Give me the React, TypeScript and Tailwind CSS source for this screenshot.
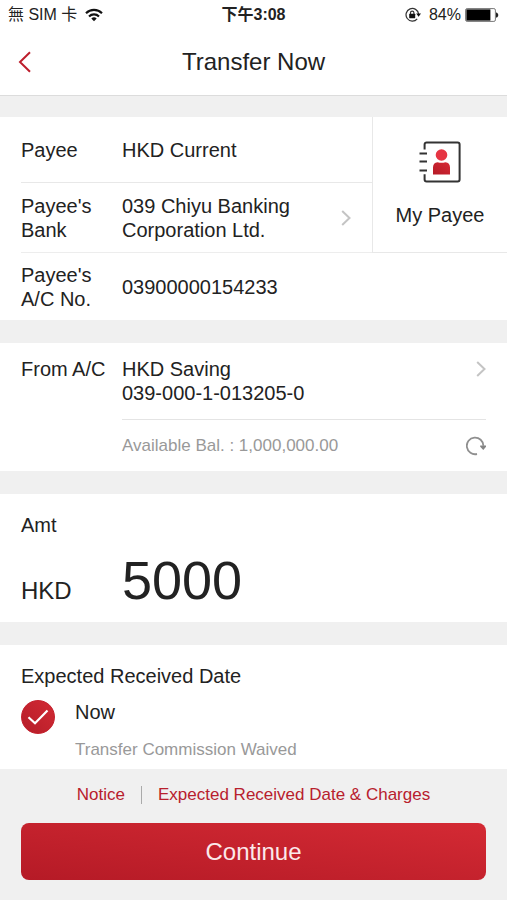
import { useState } from "react";

function WifiIcon() {
  return (
    <svg viewBox="0 0 18 14" className="h-[14px] w-[18px]" fill="none" stroke="#111" strokeWidth="2.1">
      <path d="M1 5.2a11.4 11.4 0 0 1 16 0" />
      <path d="M4 8.4a7.1 7.1 0 0 1 10 0" />
      <path d="M9 13.2 6.3 10.6a3.8 3.8 0 0 1 5.4 0Z" fill="#111" stroke="none" />
    </svg>
  );
}

function RotationLockIcon() {
  return (
    <svg viewBox="0 0 16 16" className="h-4 w-4" fill="none" stroke="#333" strokeWidth="1.2">
      <path d="M12.2 11.8A6.3 6.3 0 1 1 13.6 7" />
      <path d="M11.2 6.6h4.8l-2.4 3.2Z" fill="#111" stroke="none" />
      <path d="M5.5 7.2V5.8a1.7 1.7 0 0 1 3.4 0v1.4" />
      <rect x="4.2" y="6.8" width="6" height="4.4" rx="0.4" fill="#111" stroke="none" />
    </svg>
  );
}

function BatteryIcon() {
  return (
    <svg viewBox="0 0 34 14" className="h-[14px] w-[34px]">
      <rect x="0.6" y="0.6" width="29.8" height="12.8" rx="1.5" fill="#fff" stroke="#777" />
      <rect x="1.4" y="1.4" width="24" height="11.2" fill="#000" />
      <path d="M31 4.4c3 .4 3 4.8 0 5.2Z" fill="#222" />
    </svg>
  );
}

function Chevron() {
  return (
    <svg viewBox="0 0 10 16" className="h-4 w-[10px] shrink-0" fill="none" stroke="#c4c4c4" strokeWidth="2">
      <path d="m1.2 1 7.3 7-7.3 7" />
    </svg>
  );
}

function RefreshIcon() {
  return (
    <svg viewBox="0 0 20 20" className="h-5 w-5" fill="none" stroke="#8f8f8f" strokeWidth="1.8">
      <path d="M11 18A8.3 8.3 0 1 1 17.4 9.8" />
      <path d="M14.2 9.4H20v1.4l-2.7 3.2-3.1-3.2Z" fill="#858585" stroke="none" />
    </svg>
  );
}

function PayeeBookIcon() {
  return (
    <svg viewBox="0 0 42 42" className="h-[42px] w-[42px]" fill="none" stroke="#333" strokeWidth="2">
      <defs>
        <linearGradient id="person" x1="1" y1="0" x2="0" y2="1">
          <stop offset="0" stopColor="#d62a36" />
          <stop offset="1" stopColor="#b51a26" />
        </linearGradient>
      </defs>
      <path d="M5.6 8.5V3.4a2 2 0 0 1 2-2h31a2 2 0 0 1 2 2v35a2 2 0 0 1-2 2h-31a2 2 0 0 1-2-2v-5.2" />
      <path d="M.5 12.4H8M.5 20.4H8M.5 29.4H8" />
      <circle cx="22.5" cy="14" r="5.8" fill="#e63543" stroke="none" />
      <path d="M14 33.4v-7q0-4.6 4.6-5.2 3.9 1 7.8 0 4.6.6 4.6 5.2v7Z" fill="url(#person)" stroke="none" />
    </svg>
  );
}

function StatusBar() {
  return (
    <div className="grid h-[30px] grid-cols-[1fr_auto_1fr] items-center bg-white px-2 text-base text-[#222]">
      <div className="flex items-center gap-2">
        <span>無 SIM 卡</span>
        <WifiIcon />
      </div>
      <span className="font-bold">下午3:08</span>
      <div className="flex items-center justify-end gap-1">
        <RotationLockIcon />
        <span className="pl-1">84%</span>
        <BatteryIcon />
      </div>
    </div>
  );
}

export default function App() {
  const [accountNo, setAccountNo] = useState("03900000154233");
  const [amount, setAmount] = useState("5000");

  return (
    <div className="min-h-screen bg-[#f0f0f0] font-['Liberation_Sans','Noto_Sans_CJK_TC',sans-serif] text-xl leading-6 text-[#222]">
      <StatusBar />

      <header className="grid h-[66px] grid-cols-[1fr_auto_1fr] items-center border-b border-[#dcdcdc] bg-white px-4 pb-0.5">
        <button type="button" aria-label="Back" className="flex w-4 justify-center">
          <svg viewBox="0 0 13 22" className="h-[22px] w-[13px]" fill="none" stroke="#bd1e2c" strokeWidth="2">
            <path d="M12 1.2 2 11l10 9.8" />
          </svg>
        </button>
        <h1 className="text-2xl">Transfer Now</h1>
      </header>

      <main>
        <section className="mt-[21px] bg-white">
          <div className="flex">
            <div className="flex-1 pl-[21px]">
              <div className="flex h-[66px] items-center border-b border-[#e8e8e8]">
                <span className="w-[101px]">Payee</span>
                <span>HKD Current</span>
              </div>
              <div className="flex h-[70px] items-center border-b border-[#ededed]">
                <span id="bank-label" className="w-[101px] pr-4">
                  Payee's Bank
                </span>
                <button
                  type="button"
                  aria-describedby="bank-label"
                  className="flex flex-1 items-center justify-between pr-[21px] text-left"
                >
                  <span>
                    039 Chiyu Banking
                    <br />
                    Corporation Ltd.
                  </span>
                  <Chevron />
                </button>
              </div>
            </div>
            <button
              type="button"
              className="flex w-[135px] flex-col items-center justify-center gap-5 border-b border-l border-[#e8e8e8] pb-0.5"
            >
              <PayeeBookIcon />
              <span>My Payee</span>
            </button>
          </div>
          <div className="flex h-[67px] items-center px-[21px]">
            <label htmlFor="account-no" className="w-[101px] pr-4">
              Payee's A/C No.
            </label>
            <input
              id="account-no"
              type="text"
              value={accountNo}
              onChange={(e) => setAccountNo(e.target.value)}
              className="min-w-0 flex-1 outline-none"
            />
          </div>
        </section>

        <section className="mt-[23px] flex h-[128px] bg-white px-[21px]">
          <span id="from-label" className="w-[101px] pt-[14px]">
            From A/C
          </span>
          <div className="flex-1">
            <button
              type="button"
              aria-describedby="from-label"
              className="flex h-[77px] w-full items-start justify-between border-b border-[#e4e4e4] pt-[14px] text-left"
            >
              <span>
                HKD Saving
                <br />
                039-000-1-013205-0
              </span>
              <span className="pt-1">
                <Chevron />
              </span>
            </button>
            <div className="flex h-[51px] items-center justify-between text-[17px] text-[#999]">
              <span>Available Bal. : 1,000,000.00</span>
              <button type="button" aria-label="Refresh balance">
                <RefreshIcon />
              </button>
            </div>
          </div>
        </section>

        <section className="mt-[23px] h-[128px] bg-white px-[21px] pt-[19px]">
          <label htmlFor="amount" className="block">
            Amt
          </label>
          <div className="flex items-baseline pt-[13px]">
            <span className="w-[101px] text-2xl">HKD</span>
            <input
              id="amount"
              type="text"
              inputMode="decimal"
              value={amount}
              onChange={(e) => setAmount(e.target.value)}
              className="h-[60px] min-w-0 flex-1 text-[54px] outline-none"
            />
          </div>
        </section>

        <section className="mt-[23px] h-[124px] bg-white px-[21px] pt-[19px]">
          <h2>Expected Received Date</h2>
          <div className="flex gap-5 pt-3">
            <span className="grid h-[34px] w-[34px] place-items-center">
              <input
                id="date-now"
                type="radio"
                name="date"
                defaultChecked
                className="col-start-1 row-start-1 h-[34px] w-[34px] appearance-none rounded-full border border-[#c4202d] checked:bg-linear-to-tr checked:from-[#b51c28] checked:to-[#d22a34]"
              />
              <svg
                viewBox="0 0 22 16"
                className="pointer-events-none col-start-1 row-start-1 h-4 w-[22px]"
                fill="none"
                stroke="#fff"
                strokeWidth="2.2"
              >
                <path d="m1.5 8.2 6.5 6L20.5 1.6" />
              </svg>
            </span>
            <label htmlFor="date-now">
              <span className="block">Now</span>
              <span className="mt-[14px] block text-[17px] leading-6 text-[#999]">Transfer Commission Waived</span>
            </label>
          </div>
        </section>
      </main>

      <footer className="px-[21px] pb-5 pt-[14px]">
        <nav className="flex items-center justify-center text-[17px] leading-6 text-[#b8202d]">
          <a href="#notice">Notice</a>
          <span className="mx-4 h-[18px] w-px bg-[#aaa]" />
          <a href="#charges">Expected Received Date &amp; Charges</a>
        </nav>
        <button
          type="button"
          className="mt-4 h-[57px] w-full rounded-lg bg-linear-to-tr from-[#b51a26] to-[#d42a34] text-2xl text-[#fbe9ea]"
        >
          Continue
        </button>
      </footer>
    </div>
  );
}
